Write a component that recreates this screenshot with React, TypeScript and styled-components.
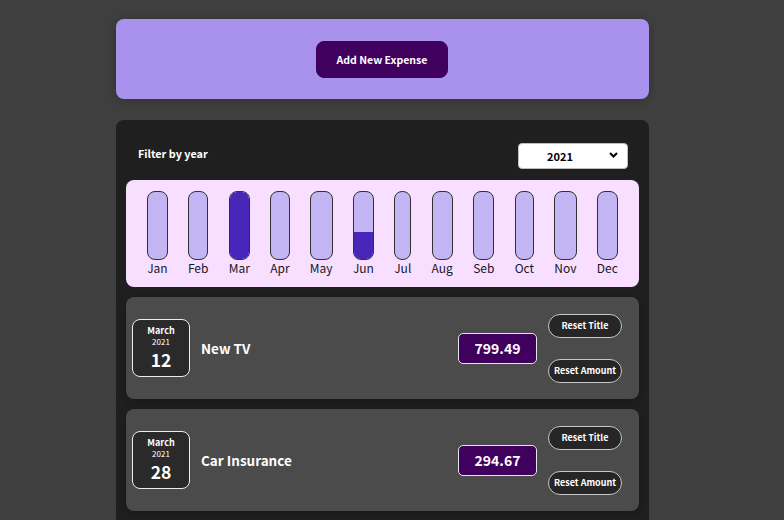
import React from "react";
import styled, { createGlobalStyle } from "styled-components";

const Global = createGlobalStyle`
  * { box-sizing: border-box; }
  html, body { margin: 0; padding: 0; }
  body {
    background: #3f3f3f;
    font-family: "Noto Sans CJK JP", "Noto Sans", sans-serif;
    overflow: hidden;
  }
`;

const Page = styled.div`
  width: 533px;
  margin: 19px 0 0 116px;
  display: flex;
  flex-direction: column;
  gap: 21px;
`;

const NewExpenseCard = styled.div`
  background: #a892ee;
  height: 80px;
  border-radius: 8px;
  box-shadow: 0 1px 8px rgba(0, 0, 0, 0.25);
  display: flex;
  align-items: center;
  justify-content: center;
`;

const PrimaryButton = styled.button`
  font-family: inherit;
  font-weight: 700;
  font-size: 10.5px;
  color: #fff;
  background: #40005d;
  border: 1px solid #40005d;
  border-radius: 8px;
  width: 132px;
  height: 37px;
  margin-right: 1px;
  cursor: pointer;
`;

const ExpensesCard = styled.div`
  background: #1f1f1f;
  border-radius: 8px;
  padding: 11px 10px 10px;
  min-height: 420px;
`;

const FilterRow = styled.div`
  display: flex;
  align-items: center;
  justify-content: space-between;
  padding: 0 11px 0 12px;
  margin: 11px 0 12px;
  color: #fff;
`;

const FilterLabel = styled.label`
  font-weight: 700;
  font-size: 10.8px;
  margin-bottom: 4px;
`;

const SelectWrap = styled.div`
  position: relative;
  width: 110px;
  height: 26px;
`;

const Select = styled.select`
  appearance: none;
  width: 100%;
  height: 100%;
  font-family: inherit;
  font-weight: 700;
  font-size: 11px;
  color: #000;
  background: #fff;
  border: 1px solid #bdbdbd;
  border-radius: 4px;
  padding: 0 0 0 28px;
`;

const Chevron = styled.svg`
  position: absolute;
  right: 10px;
  top: 10px;
  pointer-events: none;
`;

const Chart = styled.div`
  background: #f8dfff;
  border-radius: 8px;
  height: 107px;
  padding: 11px 11px 12px;
  display: flex;
  justify-content: space-around;
`;

const BarColumn = styled.div`
  height: 100%;
  display: flex;
  flex-direction: column;
  align-items: stretch;
`;

const BarTrack = styled.div`
  flex: 1;
  border: 1px solid #313131;
  border-radius: 8px;
  background: #c3b4f3;
  overflow: hidden;
  display: flex;
  flex-direction: column;
  justify-content: flex-end;
`;

const BarFill = styled.div`
  background: #4826b9;
  width: 100%;
`;

const BarLabel = styled.div`
  font-size: 12px;
  color: #161626;
  text-align: center;
  line-height: 14px;
  margin-top: 1px;
`;

const ItemList = styled.div`
  display: flex;
  flex-direction: column;
  gap: 10px;
  margin-top: 10px;
`;

const Item = styled.div`
  background: #4b4b4b;
  border-radius: 8px;
  height: 102px;
  padding: 0 17px 0 6px;
  display: flex;
  align-items: center;
  box-shadow: 0 2px 8px rgba(0, 0, 0, 0.25);
`;

const DateBox = styled.div`
  width: 58px;
  height: 58px;
  border: 1px solid #ececec;
  border-radius: 8px;
  background: #2a2a2a;
  color: #fff;
  display: flex;
  flex-direction: column;
  align-items: center;
  justify-content: center;
  padding-bottom: 3px;
`;

const DateMonth = styled.div`
  font-size: 9px;
  font-weight: 700;
  line-height: 12px;
`;

const DateYear = styled.div`
  font-size: 8px;
  line-height: 10px;
`;

const DateDay = styled.div`
  font-size: 17.5px;
  font-weight: 700;
  line-height: 18px;
  margin-top: 4px;
`;

const Title = styled.h2`
  flex: 1;
  margin: 0 0 0 11px;
  font-size: 13.5px;
  font-weight: 700;
  color: #fff;
`;

const Amount = styled.div`
  width: 79px;
  height: 31px;
  background: #40005d;
  border: 1px solid #e6e6e6;
  border-radius: 5px;
  color: #fff;
  font-size: 14px;
  font-weight: 700;
  display: flex;
  align-items: center;
  justify-content: center;
`;

const Actions = styled.div`
  display: flex;
  flex-direction: column;
  gap: 21px;
  margin-left: 11px;
`;

const PillButton = styled.button`
  width: 74px;
  height: 24px;
  border-radius: 12px;
  border: 1px solid #c8c8c8;
  background: #262626;
  color: #fff;
  font-family: inherit;
  font-weight: 700;
  font-size: 9px;
  padding: 0;
  cursor: pointer;
`;

const months = [
  { label: "Jan", fill: 0 },
  { label: "Feb", fill: 0 },
  { label: "Mar", fill: 100 },
  { label: "Apr", fill: 0 },
  { label: "May", fill: 0 },
  { label: "Jun", fill: 41 },
  { label: "Jul", fill: 0 },
  { label: "Aug", fill: 0 },
  { label: "Seb", fill: 0 },
  { label: "Oct", fill: 0 },
  { label: "Nov", fill: 0 },
  { label: "Dec", fill: 0 },
];

const expenses = [
  { month: "March", year: "2021", day: "12", title: "New TV", amount: "799.49" },
  { month: "March", year: "2021", day: "28", title: "Car Insurance", amount: "294.67" },
];

export default function App() {
  return (
    <>
      <Global />
      <Page>
        <NewExpenseCard>
          <PrimaryButton>Add New Expense</PrimaryButton>
        </NewExpenseCard>
        <ExpensesCard>
          <FilterRow>
            <FilterLabel>Filter by year</FilterLabel>
            <SelectWrap>
              <Select defaultValue="2021">
                <option value="2022">2022</option>
                <option value="2021">2021</option>
                <option value="2020">2020</option>
                <option value="2019">2019</option>
              </Select>
              <Chevron width="9" height="6" viewBox="0 0 9 6">
                <path d="M1 1 L4.5 4.5 L8 1" fill="none" stroke="#000" strokeWidth="2" />
              </Chevron>
            </SelectWrap>
          </FilterRow>
          <Chart>
            {months.map((m) => (
              <BarColumn key={m.label}>
                <BarTrack>
                  <BarFill style={{ height: `${m.fill}%` }} />
                </BarTrack>
                <BarLabel>{m.label}</BarLabel>
              </BarColumn>
            ))}
          </Chart>
          <ItemList>
            {expenses.map((e) => (
              <Item key={e.title}>
                <DateBox>
                  <DateMonth>{e.month}</DateMonth>
                  <DateYear>{e.year}</DateYear>
                  <DateDay>{e.day}</DateDay>
                </DateBox>
                <Title>{e.title}</Title>
                <Amount>{e.amount}</Amount>
                <Actions>
                  <PillButton>Reset Title</PillButton>
                  <PillButton>Reset Amount</PillButton>
                </Actions>
              </Item>
            ))}
          </ItemList>
        </ExpensesCard>
      </Page>
    </>
  );
}
